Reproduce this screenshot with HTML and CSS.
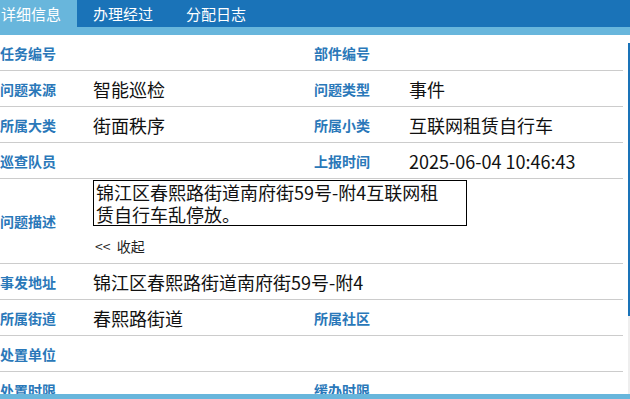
FILE: index.html
```html
<!DOCTYPE html>
<html lang="zh-CN">
<head>
    <meta charset="UTF-8">
    <meta name="viewport" content="width=device-width, initial-scale=1.0">
    <title>详细信息</title>
    <link rel="stylesheet" href="styles.css">
</head>
<body>
    <div class="tabs">
        <div class="tab active">详细信息</div>
        <div class="tab">办理经过</div>
        <div class="tab">分配日志</div>
    </div>
    <div class="strip"></div>
    <div class="content">
        <div class="detail">
            <div class="row">
                <div class="label">任务编号</div>
                <div class="value"></div>
                <div class="label">部件编号</div>
                <div class="value"></div>
            </div>
            <div class="row">
                <div class="label">问题来源</div>
                <div class="value">智能巡检</div>
                <div class="label">问题类型</div>
                <div class="value">事件</div>
            </div>
            <div class="row">
                <div class="label">所属大类</div>
                <div class="value">街面秩序</div>
                <div class="label">所属小类</div>
                <div class="value">互联网租赁自行车</div>
            </div>
            <div class="row">
                <div class="label">巡查队员</div>
                <div class="value"></div>
                <div class="label">上报时间</div>
                <div class="value">2025-06-04 10:46:43</div>
            </div>
            <div class="row tall">
                <div class="label">问题描述</div>
                <div class="desc">
                    <div class="desc-box">锦江区春熙路街道南府街59号-附4互联网租赁自行车乱停放。</div>
                    <a class="toggle">&lt;&lt; 收起</a>
                </div>
            </div>
            <div class="row">
                <div class="label">事发地址</div>
                <div class="value wide">锦江区春熙路街道南府街59号-附4</div>
            </div>
            <div class="row">
                <div class="label">所属街道</div>
                <div class="value">春熙路街道</div>
                <div class="label">所属社区</div>
                <div class="value"></div>
            </div>
            <div class="row">
                <div class="label">处置单位</div>
                <div class="value wide"></div>
            </div>
            <div class="row">
                <div class="label">处置时限</div>
                <div class="value"></div>
                <div class="label">缓办时限</div>
                <div class="value"></div>
            </div>
        </div>
        <div class="scrollbar">
            <div class="thumb"></div>
        </div>
    </div>
    <div class="bottom-strip"></div>
</body>
</html>
```

FILE: styles.css
```css
html, body {
    margin: 0;
    height: 399px;
    overflow: hidden;
}
body {
    font-family: "Noto Sans CJK SC", "Noto Sans", sans-serif;
    background-color: #fff;
    display: flex;
    flex-direction: column;
}
.tabs {
    display: flex;
    height: 27px;
    background-color: #1a73b8;
}
.tab {
    padding: 0 17px 0 16px;
    color: #fff;
    font-size: 15px;
    line-height: 27px;
}
.tab.active {
    background-color: #68b6dc;
    padding-left: 1px;
    padding-right: 16px;
}
.strip {
    height: 8px;
    background-color: #68b6dc;
}
.content {
    flex: 1;
    display: flex;
    overflow: hidden;
}
.detail {
    width: 623px;
}
.row {
    display: grid;
    grid-template-columns: 93px 221px 95px 1fr;
    align-items: center;
    height: 35px;
    border-bottom: 1px solid #cccccc;
}
.row.tall {
    height: 84px;
    grid-template-columns: 93px 1fr;
}
.label {
    color: #2a78b9;
    font-size: 14px;
    font-weight: bold;
}
.value {
    color: #111;
    font-size: 18px;
}
.value.wide {
    grid-column: 2 / 5;
}
.desc {
    align-self: start;
    padding-top: 1px;
}
.desc-box {
    width: 358px;
    border: 1px solid #000;
    padding: 0 12px 0 2px;
    font-size: 18px;
    line-height: 22px;
    color: #111;
}
.toggle {
    display: block;
    margin: 10px 0 0 2px;
    font-size: 14px;
    color: #222;
    word-spacing: 3px;
}
.scrollbar {
    width: 2px;
    margin: 8px 0 0 5px;
    background-color: #eeeeee;
}
.thumb {
    height: 273px;
    background-color: #1a73b8;
}
.bottom-strip {
    height: 5px;
    background-color: #68b6dc;
}
```
